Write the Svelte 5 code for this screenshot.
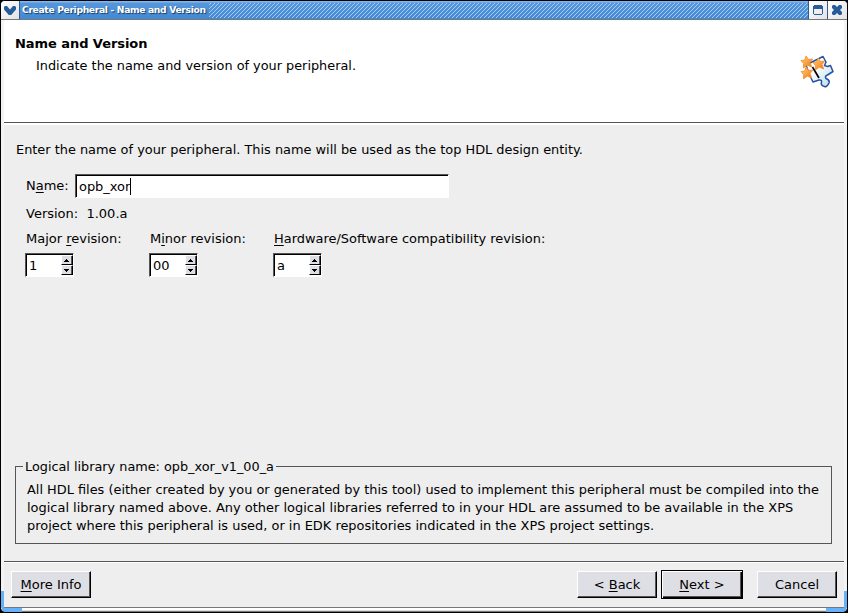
<script>
  const revisions = [
    { before: 'Major ', key: 'r', after: 'evision:', value: '1', width: 124 },
    { before: 'M', key: 'i', after: 'nor revision:', value: '00', width: 124 },
    { before: '', key: 'H', after: 'ardware/Software compatibility revision:', value: 'a', width: 290 }
  ];
  const star = '4.6,0 6.8,3.1 10.7,2.8 8.2,6 9.8,10 5.8,8.3 2.2,10.8 2.4,6.9 0,4.2 3.4,3.6';
</script>

<div class="window">
  <header class="titlebar">
    <span class="tb menu">
      <svg width="12" height="9" viewBox="0 0 12 9"><path d="M0 1L1 0H3L6 3.500L9 0H11L12 1V3.500L7.200 9H4.800L0 3.500Z" fill="#265d99" /></svg>
    </span>
    <div class="caption"><span>Create Peripheral - Name and Version</span>
      <svg class="hatch" width="602" height="18">
        <defs><pattern id="hatch" width="4" height="4" patternUnits="userSpaceOnUse"><path d="M-1 1L1 -1M0 4L4 0M3 5L5 3" stroke="#a5cdf6" stroke-width="1" /></pattern></defs>
        <rect y="2" width="602" height="15" fill="url(#hatch)" />
      </svg>
    </div>
    <span class="tb max"><svg width="10" height="10" shape-rendering="crispEdges"><path d="M1 0H9V1H10V9H9V10H1V9H0V1H1Z" fill="#265d99" /><path d="M1 4H9V9H1Z" fill="#eeeef1" /></svg></span>
    <span class="tb close"><svg width="10" height="10" viewBox="0 0 10 10"><path d="M0 1L1 0H3L5 2L7 0H9L10 1V3L8 5L10 7V9L9 10H7L5 8L3 10H1L0 9V7L2 5L0 3Z" fill="#265d99" /></svg></span>
  </header>

  <div class="client">
    <section class="banner">
      <div>
        <h1>Name and Version</h1>
        <p>Indicate the name and version of your peripheral.</p>
      </div>
      <svg class="wizard" width="34" height="34" viewBox="0 0 34 34">
        <defs>
          <linearGradient id="piece" x1="0" y1="0" x2="1" y2="1"><stop offset=".35" stop-color="#fff" /><stop offset="1" stop-color="#b5dcec" /></linearGradient>
          <linearGradient id="gold" x1="0" y1="0" x2="1" y2="1"><stop offset="0.2" stop-color="#ffc45c" /><stop offset="1" stop-color="#f36c15" /></linearGradient>
        </defs>
        <path d="M6 11L23 2.500L26 8L24.500 11.500L27.500 12.500L30.500 11.500L33 17.500L27.500 21Q24.500 22 26 24.500Q30 26 29 29Q27 33.500 24.500 32.500Q20.500 31.500 21.500 28.500Q22 25.500 19 26L13 28L9.500 21Z" fill="url(#piece)" stroke="#2850a5" stroke-width="1.500" stroke-linejoin="round" />
        <path d="M12.500 13L19 24" stroke="#000" stroke-width="1.700" />
        <g fill="url(#gold)" stroke="#f09238" stroke-width=".8" stroke-linejoin="round">
          <polygon points={star} transform="translate(1 2) scale(1.1)" />
          <polygon points={star} transform="translate(13 4) scale(1.1)" />
          <polygon points={star} transform="translate(1 13) scale(1.1)" />
        </g>
      </svg>
    </section>

    <main>
      <p class="intro">Enter the name of your peripheral. This name will be used as the top HDL design entity.</p>
      <div class="name-row">
        <span class="label">N<u>a</u>me:</span>
        <div class="field name-field"><span>opb_xor</span><i class="caret"></i></div>
      </div>
      <p class="version">Version:&nbsp; 1.00.a</p>
      <div class="revisions">
        {#each revisions as r}
          <div class="revision" style="width:{r.width}px">
            <div class="label">{r.before}<u>{r.key}</u>{r.after}</div>
            <div class="field spinner">
              <span>{r.value}</span>
              <div class="arrows">
                <b><svg width="5" height="3" shape-rendering="crispEdges"><path d="M2 0h1v1h1v1h1v1H0V2h1V1h1z" /></svg></b>
                <b><svg width="5" height="3" shape-rendering="crispEdges"><path d="M0 0h5v1H4v1H3v1H2V2H1V1H0z" /></svg></b>
              </div>
            </div>
          </div>
        {/each}
      </div>
      <fieldset>
        <legend><span>Logical library name: opb_xor_v1_00_a</span></legend>
        <p>All HDL files (either created by you or generated by this tool) used to implement this peripheral must be compiled into the<br /><span class="middle-line">logical library named above. Any other logical libraries referred to in your HDL are assumed to be available in the XPS</span><br /><span class="last-line">project where this peripheral is used, or in EDK repositories indicated in the XPS project settings.</span></p>
      </fieldset>
    </main>

    <footer>
      <button><u>M</u>ore Info</button>
      <button class="back">&lt; <u>B</u>ack</button>
      <button class="next"><u>N</u>ext &gt;</button>
      <button class="cancel">Cancel</button>
    </footer>
  </div>
  <div class="frame-bottom"></div>
  <i class="grip left"></i>
  <i class="grip right"></i>
</div>

<style>
  :global(body) { margin: 0; background: #000; }
  * { box-sizing: border-box; }
  .window {
    position: relative; width: 848px; height: 613px; overflow: hidden;
    display: flex; flex-direction: column;
    background: #f3f3f3; border: 1px solid #000;
    border-radius: 5px 5px 6px 6px;
    font: 13px/16px "DejaVu Sans", sans-serif; color: #000;
  }
  p, h1 { margin: 0; font-size: 13px; white-space: nowrap; }
  h1 { letter-spacing: -.06px; }
  u { text-decoration: underline; text-decoration-thickness: 1px; text-underline-offset: 2px; text-decoration-skip-ink: none; }
  svg { display: block; flex: none; }
  .titlebar { flex: none; display: flex; height: 19px; border-bottom: 1px solid #777; background: #4a8dd5; }
  .tb { flex: none; display: flex; align-items: center; justify-content: center; width: 19px; background: linear-gradient(135deg, #fff, #e2e2e6); }
  .menu { border-right: 1px solid #315c8b; }
  .max, .close { border-left: 1px solid #315c8b; }
  .max { margin-left: auto; }
  .close { width: 20px; padding-right: 1px; }
  .caption { flex: 1; display: flex; overflow: hidden; padding-left: 2px; background: linear-gradient(#80b8ef 0 1px, #5796da 2px, #438ad4 17px); }
  .caption span { flex: none; width: 187px; font: bold 9.2px/18px "DejaVu Sans", sans-serif; letter-spacing: -.34px; color: #fff; white-space: nowrap; text-shadow: 1px 1px 1px #183b64; }
  .client { flex: none; height: 587px; margin: 0 3px; display: flex; flex-direction: column; background: #eee; }
  .banner { flex: none; height: 105px; display: flex; justify-content: space-between; padding: 16px 10px 0 11px; background: #fff; border-bottom: 2px solid #fff; box-shadow: inset 0 -1px #555; }
  .banner p { margin: 6px 0 0 21px; font-size: 12.85px; }
  .wizard { margin-top: 18px; }
  main { flex: none; height: 436px; padding: 17px 12px 0 11px; }
  .intro { padding-left: 1px; font-size: 12.9px; }
  .name-row { display: flex; align-items: center; margin-top: 16px; padding-left: 11px; }
  .name-row .label { width: 49px; }
  .field { height: 24px; display: flex; align-items: center; background: #fff; border: 1px solid; border-color: #555 #fff #fff #555; box-shadow: inset 1px 1px #000; }
  .field span { padding-top: 2px; }
  .name-field { width: 374px; padding-left: 3px; }
  .name-field span { letter-spacing: -.05px; }
  .caret { width: 1px; height: 17px; margin-top: 1px; background: #000; }
  .version { margin: 8px 0 0 11px; }
  .revisions { display: flex; margin: 9px 0 0 10px; }
  .revision .label { padding-left: 1px; white-space: nowrap; }
  .revision:last-child .label { font-size: 12.95px; }
  .spinner { width: 49px; margin-top: 6px; padding-left: 3px; justify-content: space-between; }
  .arrows { width: 12px; height: 20px; display: flex; flex-direction: column; }
  .arrows b { height: 10px; display: flex; align-items: center; justify-content: center; padding-right: 1px; background: #dedfe5; border: 1px solid; border-color: #fff #000 #000 #fff; box-shadow: inset -1px 0 #555; }
  fieldset { min-width: 0; margin: 181px 0 0; padding: 0 0 0 11px; width: 817px; height: 86px; border: 1px solid #555; }
  legend { margin-left: -4px; padding: 0 2px; height: 16px; line-height: 18px; font-size: 12.82px; }
  fieldset p { margin-top: 7px; line-height: 18px; font-size: 12.9px; }
  .middle-line { font-size: 12.96px; }
  .last-line { font-size: 12.93px; }
  footer { flex: none; height: 46px; display: flex; align-items: flex-start; padding: 9px 7px 0 7px; border-top: 1px solid #555; box-shadow: inset 0 1px #fff; }
  button { width: 80px; height: 27px; padding: 1px 0 0 0; font: 13px/16px "DejaVu Sans", sans-serif; color: #000; background: #dedfe5; border: 1px solid; border-color: #fff #000 #000 #fff; border-radius: 0; box-shadow: inset -1px -1px #555; }
  .back { margin-left: auto; }
  .next { width: 82px; height: 29px; margin: -1px 0 0 4px; border-color: #000; box-shadow: inset 1px 1px #fff, inset -1px -1px #000, inset -2px -2px #555; }
  .cancel { margin-left: 14px; }
  .frame-bottom { height: 5px; border-top: 1px solid #777; border-bottom: 1px solid #777; background: linear-gradient(#fff 0 2px, #ddd 2px); }
  .grip { position: absolute; bottom: 0; width: 21px; height: 21px; border: solid #65b2fa; }
  .left { left: 0; border-width: 0 0 4px 3px; border-bottom-left-radius: 5px; }
  .right { right: 0; border-width: 0 3px 4px 0; border-bottom-right-radius: 5px; }
</style>
